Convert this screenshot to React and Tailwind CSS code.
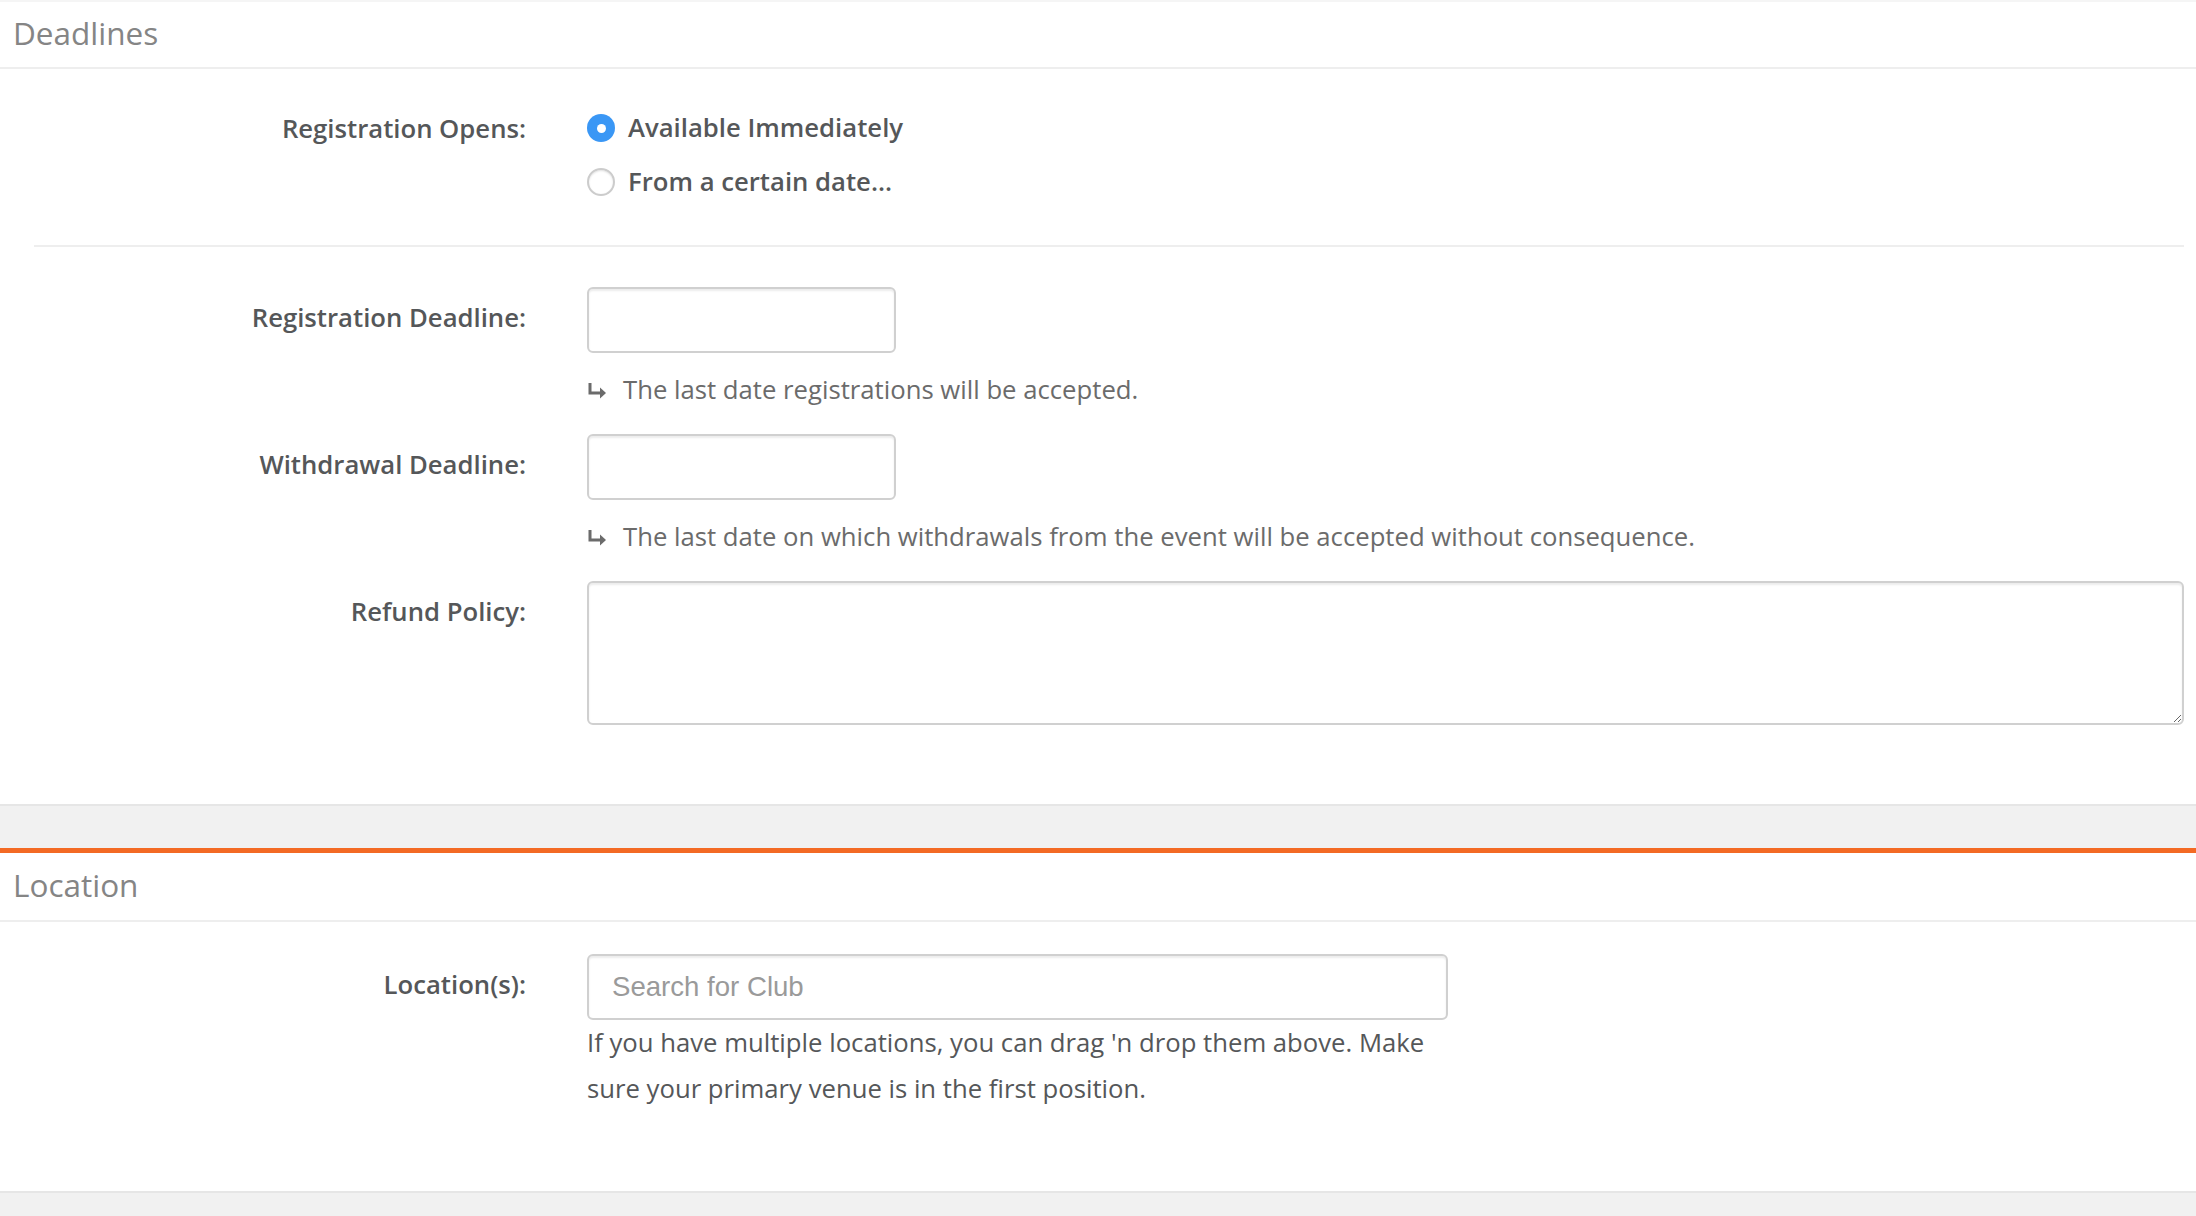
const LABEL = 'flex justify-end items-center text-right font-semibold text-[#555759]'
const INPUT =
  'block rounded-[6px] border-2 border-[#d0d0d0] bg-white shadow-[inset_0_2px_2px_rgba(0,0,0,0.08)] outline-none'

function SectionHeader({ title, height = 'h-[67px]' }) {
  return (
    <div className={`${height} flex items-center px-[13px] pb-[3px] border-b-2 border-[#eeeeee]`}>
      <h2 className="text-[31.5px] font-normal text-[#858585]">{title}</h2>
    </div>
  )
}

function Radio({ checked, children }) {
  return (
    <label className="flex items-center h-[54px] gap-[13px] cursor-pointer">
      {checked ? (
        <span className="w-[28px] h-[28px] rounded-full bg-[#3a97f5] flex items-center justify-center">
          <span className="w-[9px] h-[9px] rounded-full bg-white" />
        </span>
      ) : (
        <span className="w-[28px] h-[28px] rounded-full bg-white border-2 border-[#cccccc] shadow-[inset_0_1px_2px_rgba(0,0,0,0.12)]" />
      )}
      <span className="font-semibold text-[#555759]">{children}</span>
    </label>
  )
}

function HookArrow() {
  return (
    <svg width="22" height="18" viewBox="0 0 22 18" className="shrink-0 mr-[14px]">
      <path d="M3 2v10h13" fill="none" stroke="#6b6b6b" strokeWidth="3" />
      <path d="M13 6.5l6 5.5-6 5.5z" fill="#6b6b6b" />
    </svg>
  )
}

function Help({ children }) {
  return (
    <p className="mt-[16px] h-[42px] leading-[42px] text-[#6b6b6b] flex items-center">
      <HookArrow />
      {children}
    </p>
  )
}

function Row({ label, labelClass = 'h-[66px] pb-[4px]', className = '', children }) {
  return (
    <div className={`grid grid-cols-[492px_1fr] gap-x-[61px] ${className}`}>
      <div className={`${LABEL} ${labelClass}`}>{label}</div>
      <div>{children}</div>
    </div>
  )
}

export default function App() {
  return (
    <div className="min-h-screen bg-[#f1f1f1] font-['Open_Sans',sans-serif] text-[25.7px] text-[#555759]">
      <section className="bg-white border-t-2 border-[#f5f5f5]">
        <SectionHeader title="Deadlines" />
        <div className="pl-[34px] pr-[12px]">
          <Row label="Registration Opens:" labelClass="h-[54px] pt-[2px]" className="pt-[32px] pb-[36px] border-b-2 border-[#eeeeee]">
            <Radio checked>Available Immediately</Radio>
            <Radio>From a certain date...</Radio>
          </Row>

          <Row label="Registration Deadline:" className="pt-[40px]">
            <input type="text" className={`${INPUT} w-[309px] h-[66px] px-[16px]`} />
            <Help>The last date registrations will be accepted.</Help>
          </Row>

          <Row label="Withdrawal Deadline:" className="pt-[23px]">
            <input type="text" className={`${INPUT} w-[309px] h-[66px] px-[16px]`} />
            <Help>The last date on which withdrawals from the event will be accepted without consequence.</Help>
          </Row>

          <Row label="Refund Policy:" className="pt-[23px] pb-[79px]">
            <textarea className={`${INPUT} w-full h-[144px] px-[16px] py-[10px]`} />
          </Row>
        </div>
      </section>

      <div className="h-[44px] border-t-2 border-[#e6e6e6]" />

      <section className="bg-white border-t-[5px] border-[#f36a24]">
        <SectionHeader title="Location" height="h-[69px]" />
        <div className="pl-[34px] pr-[12px]">
          <Row label="Location(s):" className="pt-[32px] pb-[79px]">
            <input
              type="text"
              placeholder="Search for Club"
              className={`${INPUT} w-[861px] h-[66px] px-[23px] text-[27.6px] font-['Liberation_Sans',Arial,sans-serif] placeholder:text-[#9a9a9a]`}
            />
            <p className="w-[861px] leading-[46px] text-[#555759]">
              If you have multiple locations, you can drag 'n drop them above. Make sure your primary venue is in the first position.
            </p>
          </Row>
        </div>
      </section>

      <div className="h-[26px] border-t-2 border-[#e6e6e6]" />
    </div>
  )
}
